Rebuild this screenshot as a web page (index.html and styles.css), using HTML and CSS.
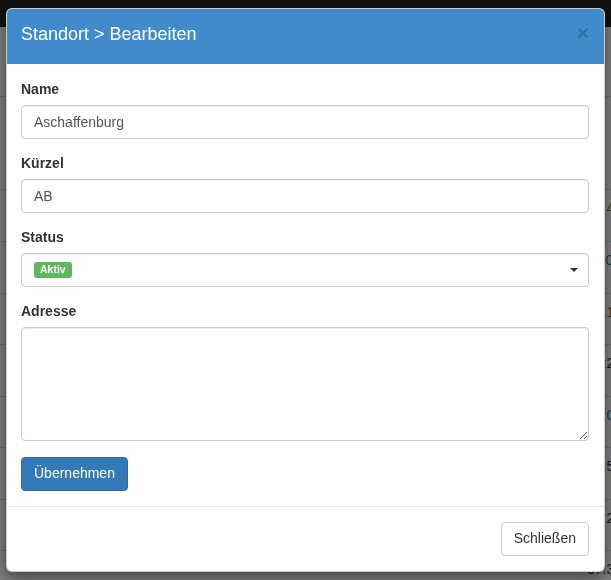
FILE: index.html
```html
<!DOCTYPE html>
<html lang="de">
<head>
<meta charset="utf-8">
<title>Standort bearbeiten</title>
<link rel="stylesheet" href="styles.css">
</head>
<body>
<div class="page">
  <div class="navbar"></div>
  <div class="toolbar"></div>
  <div class="table">
    <div class="thead"></div>
    <div class="row"><span class="cell c-warn">12:45</span></div>
    <div class="row"><span class="cell c-info">11:05</span></div>
    <div class="row short"><span class="cell c-warn">09:15</span></div>
    <div class="row"><span class="cell">10:25</span></div>
    <div class="row short"><span class="cell c-info">08:05</span></div>
    <div class="row"><span class="cell">14:55</span></div>
    <div class="row short"><span class="cell">16:25</span></div>
    <div class="row"><span class="cell">07:35</span></div>
  </div>
</div>

<div class="backdrop"></div>

<div class="modal">
  <div class="modal-dialog">
    <div class="modal-content">
      <div class="modal-header">
        <h4 class="modal-title">Standort &gt; Bearbeiten</h4>
        <button type="button" class="close">&times;</button>
      </div>
      <div class="modal-body">
        <div class="form-group">
          <label class="label">Name</label>
          <input class="form-control" type="text" value="Aschaffenburg">
        </div>
        <div class="form-group">
          <label class="label">Kürzel</label>
          <input class="form-control" type="text" value="AB">
        </div>
        <div class="form-group">
          <label class="label">Status</label>
          <div class="form-control select">
            <span class="badge">Aktiv</span>
            <span class="caret"></span>
          </div>
        </div>
        <div class="form-group">
          <label class="label">Adresse</label>
          <textarea class="form-control textarea" rows="5"></textarea>
        </div>
        <button type="button" class="btn btn-primary">Übernehmen</button>
      </div>
      <div class="modal-footer">
        <button type="button" class="btn btn-default">Schließen</button>
      </div>
    </div>
  </div>
</div>
</body>
</html>
```

FILE: styles.css
```css
* {
  box-sizing: border-box;
}

html, body {
  margin: 0;
  padding: 0;
  height: 100%;
  overflow: hidden;
}

body {
  font-family: "Liberation Sans", Arial, Helvetica, sans-serif;
  font-size: 14px;
  line-height: 1.42857;
  color: #333;
  background: #fff;
}

.page {
  width: 611px;
}

.navbar {
  height: 27px;
  background: #222;
}

.toolbar {
  height: 70px;
  border-bottom: 1px solid #ddd;
}

.table {
  display: flex;
  flex-direction: column;
}

.thead {
  height: 93px;
  border-bottom: 1px solid #ddd;
}

.row {
  height: 52px;
  border-bottom: 1px solid #ddd;
  padding-top: 8px;
}

.row.short {
  height: 51px;
}

.cell {
  display: block;
  margin-left: 587px;
  white-space: nowrap;
  font-size: 14px;
  line-height: 20px;
  color: #333;
}

.c-warn {
  color: #8a6d3b;
}

.c-info {
  color: #337ab7;
}

.backdrop {
  position: fixed;
  inset: 0;
  background: rgba(0, 0, 0, 0.5);
}

.modal {
  position: fixed;
  inset: 0;
}

.modal-dialog {
  margin: 8px 6px 0 6px;
}

.modal-content {
  background: #fff;
  border: 1px solid rgba(0, 0, 0, 0.2);
  border-radius: 6px;
  box-shadow: 0 5px 15px rgba(0, 0, 0, 0.5);
  overflow: hidden;
}

.modal-header {
  background: #428bca;
  padding: 13px 15px 16px 14px;
  display: flex;
  justify-content: space-between;
  align-items: flex-start;
}

.modal-title {
  margin: 0;
  font-size: 18px;
  font-weight: 500;
  line-height: 1.42857;
  color: #fff;
}

.close {
  border: 0;
  background: transparent;
  padding: 0;
  margin-top: 0;
  font-family: inherit;
  font-size: 21px;
  font-weight: bold;
  line-height: 1;
  color: #000;
  opacity: 0.2;
  cursor: pointer;
}

.modal-body {
  padding: 16px 15px 15px 14px;
}

.form-group {
  margin-bottom: 15px;
}

.label {
  display: inline-block;
  margin-bottom: 5px;
  font-weight: bold;
}

.form-control {
  display: block;
  width: 100%;
  height: 34px;
  padding: 6px 12px;
  font-family: inherit;
  font-size: 14px;
  line-height: 1.42857;
  color: #555;
  background: #fff;
  border: 1px solid #ccc;
  border-radius: 4px;
  box-shadow: inset 0 1px 1px rgba(0, 0, 0, 0.075);
  margin: 0;
}

.select {
  display: flex;
  align-items: center;
  justify-content: space-between;
  padding-right: 10px;
}

.badge {
  display: inline-block;
  background: #5cb85c;
  color: #fff;
  font-size: 10.5px;
  font-weight: bold;
  line-height: 1;
  padding: 2px 6px 3px;
  border-radius: 3px;
  margin-top: 1px;
}

.caret {
  width: 0;
  height: 0;
  border-left: 4px solid transparent;
  border-right: 4px solid transparent;
  border-top: 4px solid #333;
}

.textarea {
  height: 114px;
  resize: vertical;
}

.btn {
  display: inline-block;
  padding: 6px 12px;
  font-family: inherit;
  font-size: 14px;
  line-height: 1.42857;
  border: 1px solid transparent;
  border-radius: 4px;
  cursor: pointer;
  margin: 0;
}

.modal-body .btn-primary {
  margin-top: 1px;
}

.btn-primary {
  color: #fff;
  background: #337ab7;
  border-color: #2e6da4;
}

.btn-default {
  color: #333;
  background: #fff;
  border-color: #ccc;
}

.modal-footer {
  border-top: 1px solid #e5e5e5;
  padding: 15px;
  display: flex;
  justify-content: flex-end;
}
```
